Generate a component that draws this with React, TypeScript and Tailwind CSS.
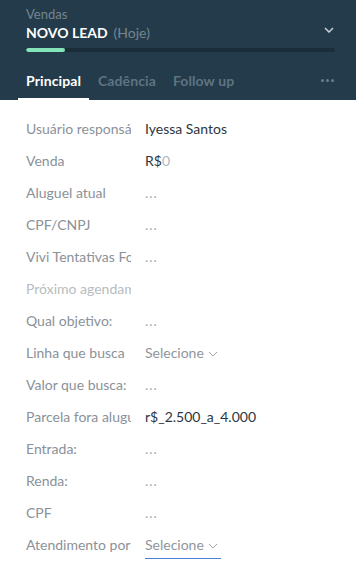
import React from "react";

const rows: { label: string; value: React.ReactNode; muted?: boolean }[] = [
  { label: "Usuário responsável", value: <span className="text-[#2e3640]">Iyessa Santos</span> },
  { label: "Venda", value: <span className="text-[#2e3640]">R$<span className="text-[#b3b8bc]">0</span></span> },
  { label: "Aluguel atual", value: <Dots /> },
  { label: "CPF/CNPJ", value: <Dots /> },
  { label: "Vivi Tentativas Follow", value: <Dots /> },
  { label: "Próximo agendamento", value: null, muted: true },
  { label: "Qual objetivo:", value: <Dots /> },
  { label: "Linha que busca", value: <Select /> },
  { label: "Valor que busca:", value: <Dots /> },
  { label: "Parcela fora aluguel", value: <span className="text-[#2e3640]">r$_2.500_a_4.000</span> },
  { label: "Entrada:", value: <Dots /> },
  { label: "Renda:", value: <Dots /> },
  { label: "CPF", value: <Dots /> },
  { label: "Atendimento por", value: <Select underline /> },
];

function Dots() {
  return <span className="text-[#a5abb0] tracking-[1px]">...</span>;
}

function Select({ underline }: { underline?: boolean }) {
  return (
    <span
      className={
        "inline-flex items-center gap-[4px] text-[#8d969c] " +
        (underline ? "border-b border-[#4a7fd8] pb-[3px] mb-[-4px] pr-[3px]" : "")
      }
    >
      Selecione
      <svg width="10" height="6" viewBox="0 0 10 6" fill="none" className="mt-[1px]">
        <path d="M1 1l4 4 4-4" stroke="#9aa2a8" strokeWidth="1" />
      </svg>
    </span>
  );
}

export default function App() {
  return (
    <div className="w-[356px] h-[568px] bg-white overflow-hidden" style={{ fontFamily: '"Lato", "Liberation Sans", sans-serif' }}>
      <div className="bg-[#233b4a] px-[26px] pt-[5px]">
        <div className="text-[13px] leading-[18px] text-[#76858f]">Vendas</div>
        <div className="flex items-center justify-between h-[20px]">
          <div className="text-[14px] leading-[20px]">
            <span className="font-bold text-white">NOVO LEAD</span>
            <span className="text-[#76858f] ml-[6px]">(Hoje)</span>
          </div>
          <svg width="10" height="6" viewBox="0 0 10 6" fill="none" className="mr-[-4px] mb-[6px]">
            <path d="M1 1l4 4 4-4" stroke="#c9d1d6" strokeWidth="1.5" />
          </svg>
        </div>
        <div className="mt-[5px] h-[4px] w-[309px] rounded-full bg-[#1a2e3a] overflow-hidden">
          <div className="h-full w-[39px] bg-[#84e6b8] rounded-full" />
        </div>
        <div className="mt-[19px] flex items-end justify-between">
          <div className="flex gap-[17px] text-[14px] leading-[20px] font-bold tracking-[0.1px]">
            <div className="relative pb-[9px] text-white">
              Principal
              <div className="absolute left-[-8px] right-[-8px] bottom-0 h-[2px] bg-white" />
            </div>
            <div className="pb-[9px] text-[#5f7482]">Cadência</div>
            <div className="pb-[9px] text-[#5f7482]">Follow up</div>
          </div>
          <div className="flex gap-[2px] pb-[18px] mr-[-4px]">
            <span className="w-[3px] h-[3px] rounded-full bg-[#6b7e8a]" />
            <span className="w-[3px] h-[3px] rounded-full bg-[#6b7e8a]" />
            <span className="w-[3px] h-[3px] rounded-full bg-[#6b7e8a]" />
          </div>
        </div>
      </div>
      <div className="pt-[13px] px-[26px] text-[14px] leading-[20px]">
        {rows.map((r, i) => (
          <div key={i} className="flex h-[32px] items-center">
            <div
              className={
                "w-[105px] shrink-0 overflow-hidden whitespace-nowrap " +
                (r.muted ? "text-[#b7bcc0]" : "text-[#8a9198]")
              }
            >
              {r.label}
            </div>
            <div className="ml-[14px] whitespace-nowrap">{r.value}</div>
          </div>
        ))}
      </div>
    </div>
  );
}
